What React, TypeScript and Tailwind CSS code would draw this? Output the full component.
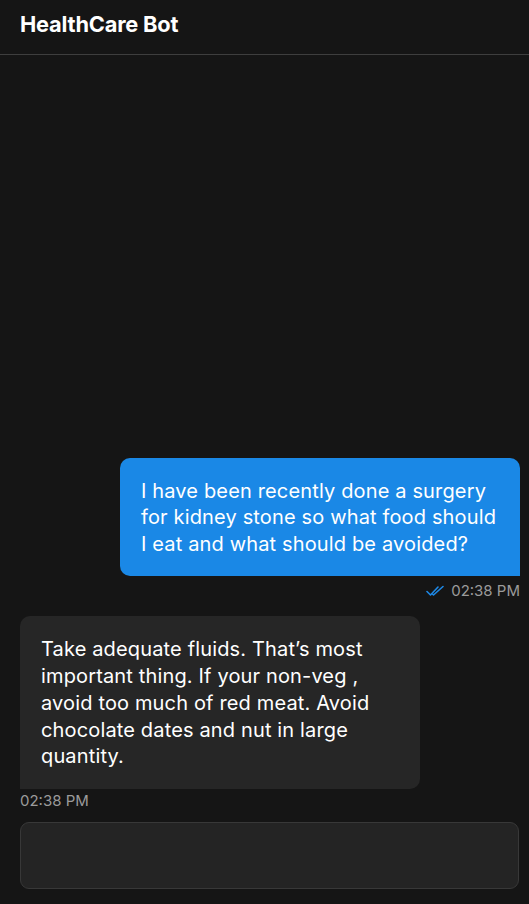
import React from "react";

function DoubleCheck() {
  return (
    <svg width="19" height="12" viewBox="0 0 19 12" fill="none" className="mr-[6px]">
      <path d="M1 6.5 L4.5 10 L12 2" stroke="#1e88e5" strokeWidth="1.6" strokeLinecap="round" strokeLinejoin="round" />
      <path d="M6.5 9 L7.5 10 L17 1.5" stroke="#1e88e5" strokeWidth="1.6" strokeLinecap="round" strokeLinejoin="round" />
    </svg>
  );
}

export default function App() {
  return (
    <div
      className="w-[529px] h-[904px] bg-[#151515] flex flex-col text-white overflow-hidden"
      style={{ fontFamily: "Inter, 'Noto Sans', sans-serif" }}
    >
      <header className="h-[55px] shrink-0 border-b border-[#3e3e3e] flex items-center pl-5 pr-[9px] pb-[4px]">
        <h1 className="text-[21.8px] font-bold tracking-[-0.2px] leading-none text-white">HealthCare Bot</h1>
      </header>
      <main className="flex-1 flex flex-col justify-end pl-5 pr-[9px] pb-[15px]">
        <div className="flex flex-col items-end">
          <div className="w-[400px] bg-[#1a88e6] rounded-[10px] rounded-br-none pl-[21px] pr-5 pt-5 pb-[19px] text-[20px] leading-[26.5px] tracking-[0.15px] text-white">
            I have been recently done a surgery for kidney stone so what food should I eat and what should be avoided?
          </div>
          <div className="flex items-center mt-[5px] text-[15px] leading-[20px] text-[#9b9b9b]">
            <DoubleCheck />
            02:38 PM
          </div>
        </div>
        <div className="flex flex-col items-start mt-[15px]">
          <div className="w-[400px] bg-[#262626] rounded-[10px] rounded-bl-none pl-[21px] pr-5 pt-5 pb-[19px] text-[20px] leading-[26.7px] tracking-[0.15px] text-white">
            Take adequate fluids. That’s most important thing. If your non-veg , avoid too much of red meat. Avoid chocolate dates and nut in large quantity.
          </div>
          <div className="mt-[2px] text-[15px] leading-[20px] text-[#9b9b9b]">02:38 PM</div>
        </div>
        <div className="mt-[11px] h-[67px] mr-px bg-[#242424] border border-[#383838] rounded-[9px]" />
      </main>
    </div>
  );
}
